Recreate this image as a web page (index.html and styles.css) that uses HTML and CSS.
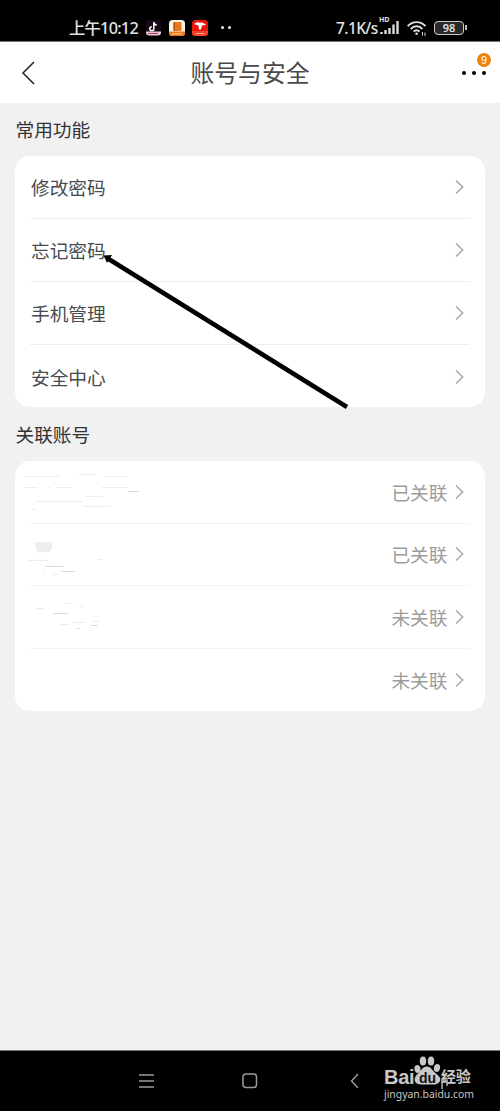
FILE: index.html
```html
<!DOCTYPE html>
<html lang="zh-CN">
<head>
<meta charset="utf-8">
<title>账号与安全</title>
<link rel="stylesheet" href="styles.css">
</head>
<body>
<div class="screen">
  <div class="status">
    <span class="clock">上午10:12</span>
    <svg class="apps" width="64" height="18" viewBox="0 0 64 18">
      <rect x="0" y="1" width="15" height="15" rx="3" fill="#170b19"/>
      <path d="M7.800 3v6.800a2 2 0 1 1-2-2M7.800 3.500c.4 1.600 1.500 2.400 3 2.500" fill="none" stroke="#fff" stroke-width="1.500"/>
      <path d="M0 12.500h15v1a3 3 0 0 1-3 3H3a3 3 0 0 1-3-3z" fill="#e9c5d0"/>
      <path d="M2 14.500h10" stroke="#c9365f"/>
      <rect x="23" y="1" width="16" height="16" rx="3.500" fill="#fff3e4"/>
      <rect x="27" y="3" width="8.500" height="9" rx="1" fill="#e9791b"/>
      <path d="M28.500 3v9" stroke="#b8550c"/>
      <path d="M23 12.500h16v1a3.500 3.500 0 0 1-3.500 3.500h-9a3.500 3.500 0 0 1-3.500-3.500z" fill="#f17719"/>
      <path d="M26 14.800h10" stroke="#ffd4a4"/>
      <rect x="46" y="1" width="16" height="16" rx="3.500" fill="#e6160e"/>
      <path d="M48 5c3-2.500 5-2 6-1 2-1 4 0 6 2l-4 .5-1 4h-2l-.5-4z" fill="#fff"/>
      <path d="M46 12h16v1.500a3.500 3.500 0 0 1-3.500 3.500h-9a3.500 3.500 0 0 1-3.500-3.500z" fill="#f1432c"/>
      <path d="M50 14.500h8" stroke="#ffac72"/>
    </svg>
    <span class="more-dots"><i></i><i></i></span>
    <span class="speed">7.1K/s</span>
    <span class="signal">
      <b>HD</b>
      <svg width="20" height="14" viewBox="0 0 20 14"><path d="M2.500 13v-2M6.500 13v-4M10.500 13V7M14.500 13V3.500M18.500 13V0" stroke="#ddd" stroke-width="2.400"/></svg>
    </span>
    <svg class="wifi" width="20" height="17" viewBox="0 0 20 17" fill="none" stroke="#ddd" stroke-width="1.900">
      <path d="M.7 6.200C5.500.7 13.700.7 18.500 6.200M3.800 9c3.300-3.700 8.300-3.700 11.600 0M6.600 11.700c1.700-1.900 4.300-1.900 6 0"/>
      <circle cx="9.600" cy="13.700" r="1.300" fill="#ddd" stroke="none"/>
      <path d="M15.500 12v3.500M18 12.500V16" stroke-width="1"/>
    </svg>
    <span class="battery">98</span><i class="battery-tip"></i>
  </div>

  <div class="header">
    <svg class="back" width="14" height="24" viewBox="0 0 14 24"><path d="M13 1 2 12l11 11" fill="none" stroke="#222" stroke-width="1.500"/></svg>
    <h1>账号与安全</h1>
    <div class="menu"><i></i><i></i><i></i><b class="badge">9</b></div>
  </div>

  <h2>常用功能</h2>
  <div class="card common">
    <div class="row"><span>修改密码</span><svg class="chev" width="9" height="16" viewBox="0 0 9 16"><path d="m1 1.500 6.700 6.500L1 14.500"/></svg></div>
    <div class="row"><span>忘记密码</span><svg class="chev" width="9" height="16" viewBox="0 0 9 16"><path d="m1 1.500 6.700 6.500L1 14.500"/></svg></div>
    <div class="row"><span>手机管理</span><svg class="chev" width="9" height="16" viewBox="0 0 9 16"><path d="m1 1.500 6.700 6.500L1 14.500"/></svg></div>
    <div class="row"><span>安全中心</span><svg class="chev" width="9" height="16" viewBox="0 0 9 16"><path d="m1 1.500 6.700 6.500L1 14.500"/></svg></div>
    <svg class="arrow" width="250" height="160" viewBox="0 0 250 160"><path d="M5 7 245 156" stroke="#000" stroke-width="4.500"/><path d="m1.500 4.500 8.500-.5-5 8z"/></svg>
  </div>

  <h2 class="linked-title">关联账号</h2>
  <div class="card linked">
    <div class="row"><em>已关联</em><svg class="chev" width="9" height="16" viewBox="0 0 9 16"><path d="m1 1.500 6.700 6.500L1 14.500"/></svg></div>
    <div class="row"><em>已关联</em><svg class="chev" width="9" height="16" viewBox="0 0 9 16"><path d="m1 1.500 6.700 6.500L1 14.500"/></svg></div>
    <div class="row"><em>未关联</em><svg class="chev" width="9" height="16" viewBox="0 0 9 16"><path d="m1 1.500 6.700 6.500L1 14.500"/></svg></div>
    <div class="row"><em>未关联</em><svg class="chev" width="9" height="16" viewBox="0 0 9 16"><path d="m1 1.500 6.700 6.500L1 14.500"/></svg></div>
    <svg class="traces" width="140" height="180" viewBox="0 0 140 180" fill="none" stroke="#ededed">
      <path d="M9 15.500h35M63 13.500h18M90 15.500h22M9 26.500h14M33 26.500h2M41 26.500h16M87 26.500h26M21 40.500h47M70 35.500h18M68 45.500h27M17 48.500h4M13 99.500h21M82 98.500h6M28 113.500h2M38 113.500h5M21 147.500h8M49 142.500h7M64 145.500h4M57 161.500h13M78 160.500h6M45 163.500h9" />
      <path d="M113 30.500h11M30 105.500h19M46 110.500h14M38 152.500h15M76 164.500h7M61 167.500h4" stroke="#dcdcdc"/>
      <path d="M20 81h17v7l-3 3h-5l-4 1-4-3z" fill="#eee" stroke="none"/>
    </svg>
  </div>

  <div class="navbar">
    <svg class="nav-menu" width="15" height="14" viewBox="0 0 15 14"><path d="M0 1h15M0 7h15M0 13h15"/></svg>
    <svg class="nav-home" width="16" height="16" viewBox="0 0 16 16"><rect x="1" y="1" width="13.500" height="13.500" rx="3"/></svg>
    <svg class="nav-back" width="9" height="16" viewBox="0 0 9 16"><path d="M8 1 1.500 8 8 15"/></svg>
    <div class="watermark">
      <div class="brand"><span class="bai">Bai</span>
        <svg class="paw" width="27" height="30" viewBox="0 0 27 30" fill="#c8c8c8"><ellipse cx="3.500" cy="13" rx="3" ry="4" transform="rotate(-15 3.500 13)"/><ellipse cx="9" cy="5" rx="3.200" ry="4.500"/><ellipse cx="17" cy="5" rx="3.200" ry="4.500"/><ellipse cx="23" cy="12" rx="3" ry="4" transform="rotate(15 23 12)"/><path d="M13 10.500c4 0 6 5 10 8 6 4 3 10-3 10H7c-7 0-8-6-4-10 4-3 5-8 10-8z"/></svg>
        <span class="du">du</span><span class="exp">经验</span>
        <svg class="mark" width="7" height="12" viewBox="0 0 7 12"><path d="M1 12V3h5v6" fill="none" stroke="#b8b8b8" stroke-width="1.500"/></svg>
      </div>
      <div class="site">jingyan.baidu.com</div>
    </div>
  </div>
</div>
</body>
</html>
```
FILE: styles.css
```css
* { box-sizing: border-box; }
body { margin: 0; background: #f1f1f1; font-family: "Liberation Sans", "Noto Sans CJK SC", sans-serif; }
svg { display: block; flex: none; }
.screen { width: 500px; height: 1111px; display: flex; flex-direction: column; overflow: hidden; }

.status { height: 42px; flex: none; background: #000; border-bottom: 1px solid #777; color: #e2e2e2; display: flex; align-items: center; padding: 14px 33px 0 69px; font-family: "Noto Sans", "Noto Sans CJK SC", sans-serif; line-height: 20px; white-space: nowrap; }
.clock { width: 77px; font-size: 16.300px; font-weight: 500; letter-spacing: -.75px; }
.more-dots { display: flex; gap: 4px; margin-left: 11px; }
.more-dots i { width: 3px; height: 3px; border-radius: 50%; background: #eee; }
.speed { margin-left: auto; font-size: 15.500px; font-weight: 500; width: 43px; letter-spacing: -.6px; }
.signal { width: 21px; position: relative; }
.signal b { position: absolute; left: 0; top: -5px; font-size: 7px; line-height: 8px; }
.wifi { margin: 1px 7px 0 7px; }
.battery { width: 30px; height: 14px; border: 1.500px solid #ccc; border-radius: 4px; background: #292929; font-size: 11px; line-height: 12px; font-weight: 600; text-align: center; }
.battery-tip { width: 2px; height: 5px; background: #bbb; margin-left: 1px; }

.header { height: 61px; flex: none; background: #fff; display: grid; grid-template-columns: 80px 1fr 80px; align-items: center; }
.back { margin-left: 21px; }
h1 { margin: 0; padding-top: 2px; text-align: center; font-size: 23.800px; line-height: 32px; font-weight: 400; color: #4a4a4a; }
.menu { display: flex; gap: 6px; position: relative; margin-left: 42px; }
.menu i { width: 4px; height: 4px; border-radius: 50%; background: #000; }
.badge { position: absolute; left: 15px; top: -18px; width: 14px; height: 14px; border-radius: 50%; background: #ee8012; color: #fff; font-size: 11px; line-height: 14px; font-weight: 400; text-align: center; }

h2 { margin: 0; height: 53px; flex: none; padding-left: 15.500px; font-size: 18.700px; line-height: 56px; font-weight: 400; color: #333; }
.linked-title { height: 54px; line-height: 57px; }
.card { margin: 0 15.500px 0 15px; padding: 0 15px; background: #fff; border-radius: 15px; position: relative; flex: none; }
.row { height: 63px; display: flex; align-items: center; font-size: 18.700px; color: #464b52; border-bottom: 1px solid #ededed; }
.row span { padding: 0 0 1px 1px; }
.row:nth-child(4) { border: 0; }
.common { height: 251px; }
.row .chev { margin: 0 5.500px 0 auto; }
.chev path { fill: none; stroke: #a8a8a8; stroke-width: 1.500; }
.linked .row { height: 62.500px; justify-content: flex-end; border-color: #f3f3f3; }
.linked .row .chev { margin-left: 7.500px; }
em { font-style: normal; color: #9c9c9c; padding-bottom: 1px; }
.arrow { position: absolute; left: 87px; top: 95px; }
.traces { position: absolute; left: 0; top: 0; }

.navbar { margin-top: auto; height: 61px; flex: none; background: #000; border-top: 1px solid #777; display: flex; align-items: center; padding: 0 27px 0 139px; }
.navbar > svg { fill: none; stroke: #999; stroke-width: 1.500; }
.nav-home { margin-left: 88px; }
.nav-back { margin-left: 92px; }
.watermark { margin-left: auto; width: 89px; height: 44px; color: #c8c8c8; padding-top: 8px; }
.brand { display: flex; height: 20px; position: relative; line-height: 20px; }
.bai { font-size: 20px; font-weight: 700; width: 30px; letter-spacing: -.3px; }
.paw { margin-top: -11px; }
.du { position: absolute; left: 35px; top: 1px; color: #111; font-size: 14px; font-weight: 700; }
.exp { font-size: 15px; font-weight: 700; letter-spacing: -.3px; }
.mark { position: absolute; left: 57px; top: 10px; }
.site { font-family: "Noto Sans", sans-serif; font-size: 10.400px; line-height: 14px; white-space: nowrap; }
```
